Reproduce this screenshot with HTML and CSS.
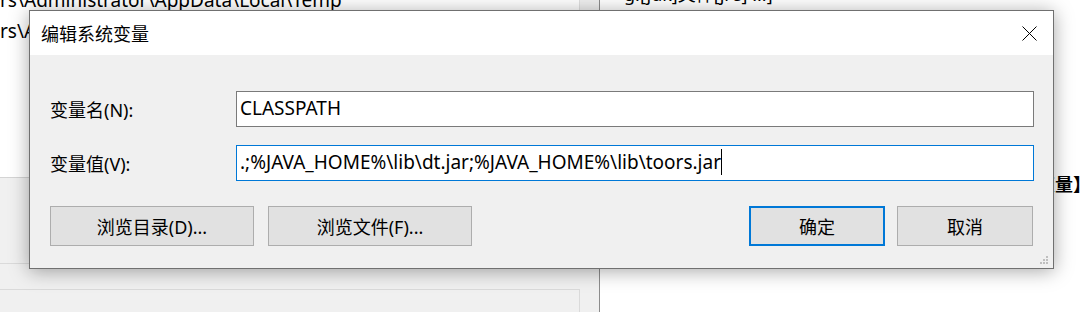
FILE: index.html
```html
<!DOCTYPE html>
<html lang="zh-CN">
<head>
  <meta charset="UTF-8" />
  <title>编辑系统变量</title>
  <link rel="stylesheet" href="styles.css">
</head>
<body>

<div class="desktop">
  <!-- window behind, left -->
  <div class="win-left">
    <div class="list">
      <div class="list-text">
        <p>rs\Administrator\AppData\Local\Temp</p>
        <p>rs\Administrator\AppData\Local\Temp</p>
      </div>
      <div class="scroll"></div>
    </div>
    <div class="sep"></div>
    <div class="group"></div>
  </div>

  <!-- window behind, right -->
  <div class="win-right">
    <p class="doc-top">g.[jdk]文件[jre] ...]</p>
    <p class="doc-mid">变量】</p>
  </div>

  <!-- dialog -->
  <div class="dialog">
    <div class="titlebar">
      <span class="title">编辑系统变量</span>
      <svg class="close" width="15" height="15" viewBox="0 0 15 15">
        <path d="M0.5 0.5 L14.5 14.5 M14.5 0.5 L0.5 14.5" stroke="#000" stroke-width="1" fill="none"/>
      </svg>
    </div>
    <div class="content">
      <div class="row">
        <label>变量名(N):</label>
        <div class="field">CLASSPATH</div>
      </div>
      <div class="row">
        <label>变量值(V):</label>
        <div class="field focused">.;%JAVA_HOME%\lib\dt.jar;%JAVA_HOME%\lib\toors.jar<span class="caret"></span></div>
      </div>
      <div class="buttons">
        <button class="btn wide">浏览目录(D)...</button>
        <button class="btn wide">浏览文件(F)...</button>
        <div class="spacer"></div>
        <button class="btn default">确定</button>
        <button class="btn">取消</button>
      </div>
    </div>
    <svg class="grip" width="9" height="9" viewBox="0 0 9 9">
      <rect x="6" y="0" width="2" height="2" fill="#bfbfbf"/>
      <rect x="3" y="3" width="2" height="2" fill="#bfbfbf"/>
      <rect x="6" y="3" width="2" height="2" fill="#bfbfbf"/>
      <rect x="0" y="6" width="2" height="2" fill="#bfbfbf"/>
      <rect x="3" y="6" width="2" height="2" fill="#bfbfbf"/>
      <rect x="6" y="6" width="2" height="2" fill="#bfbfbf"/>
    </svg>
  </div>
</div>

</body>
</html>
```

FILE: styles.css
```css
body {
  margin: 0;
  font-family: "Noto Sans", "Noto Sans CJK SC", sans-serif;
  font-size: 18px;
  color: #000;
  background: #fff;
  overflow: hidden;
}
p {
  margin: 0;
}
.desktop {
  position: relative;
  width: 1088px;
  height: 312px;
  overflow: hidden;
}

/* left background window */
.win-left {
  position: absolute;
  left: 0;
  top: 0;
  width: 599px;
  height: 312px;
  background: #f0f0f0;
  border-right: 1px solid #8c8c8c;
  box-shadow: 2px 0 10px rgba(0,0,0,0.25);
}
.list {
  display: flex;
  height: 177px;
  background: #fff;
  border-bottom: 1px solid #d4d4d4;
}
.list-text {
  flex: 1;
  margin-top: -15px;
  font-size: 19px;
  line-height: 31px;
  white-space: nowrap;
  overflow: hidden;
}
.scroll {
  width: 19px;
  background: #f0f0f0;
  border-left: 1px solid #e0e0e0;
}
.sep {
  margin-top: 85px;
  border-top: 1px solid #dadada;
}
.group {
  margin-top: 25px;
  width: 579px;
  height: 40px;
  border-top: 1px solid #dadada;
  border-right: 1px solid #dadada;
}

/* right background window */
.win-right {
  position: absolute;
  left: 600px;
  top: 0;
  right: 0;
  height: 312px;
  background: #fff;
}
.doc-top {
  margin-top: -20px;
  padding-left: 24px;
  white-space: nowrap;
}
.doc-mid {
  position: absolute;
  left: 437px;
  top: 170px;
  font-weight: bold;
  white-space: nowrap;
}

/* dialog */
.dialog {
  position: absolute;
  left: 29px;
  top: 10px;
  width: 1025px;
  height: 259px;
  box-sizing: border-box;
  border: 1px solid #707070;
  background: #f0f0f0;
  box-shadow: 0 2px 18px rgba(0,0,0,0.35);
}
.titlebar {
  display: flex;
  align-items: center;
  height: 44px;
  padding: 0 16px 0 11px;
  background: #fff;
}
.title {
  flex: 1;
}
.close {
  display: block;
}
.content {
  padding: 36px 19px 0 20px;
}
.row {
  display: flex;
  align-items: center;
  margin-bottom: 18px;
}
.row label {
  width: 186px;
}
.field {
  flex: 1;
  height: 36px;
  box-sizing: border-box;
  border: 1px solid #7a7a7a;
  background: #fff;
  padding: 0 3px;
  font-size: 19px;
  line-height: 33px;
  white-space: nowrap;
}
.field.focused {
  border-color: #0078d7;
}
.caret {
  display: inline-block;
  width: 1px;
  height: 26px;
  background: #000;
  vertical-align: -6px;
}
.buttons {
  display: flex;
  gap: 14px;
  margin-top: 25px;
  margin-right: 1px;
}
.spacer {
  flex: 1;
}
.btn {
  height: 40px;
  width: 136px;
  box-sizing: border-box;
  border: 1px solid #adadad;
  background: #e1e1e1;
  font-family: inherit;
  font-size: 18px;
  color: #000;
  padding: 0;
}
.btn.wide {
  width: 204px;
}
.btn.default {
  border: 2px solid #0078d7;
  margin-right: -2px;
}
.grip {
  position: absolute;
  right: 4px;
  bottom: 3px;
}
```
